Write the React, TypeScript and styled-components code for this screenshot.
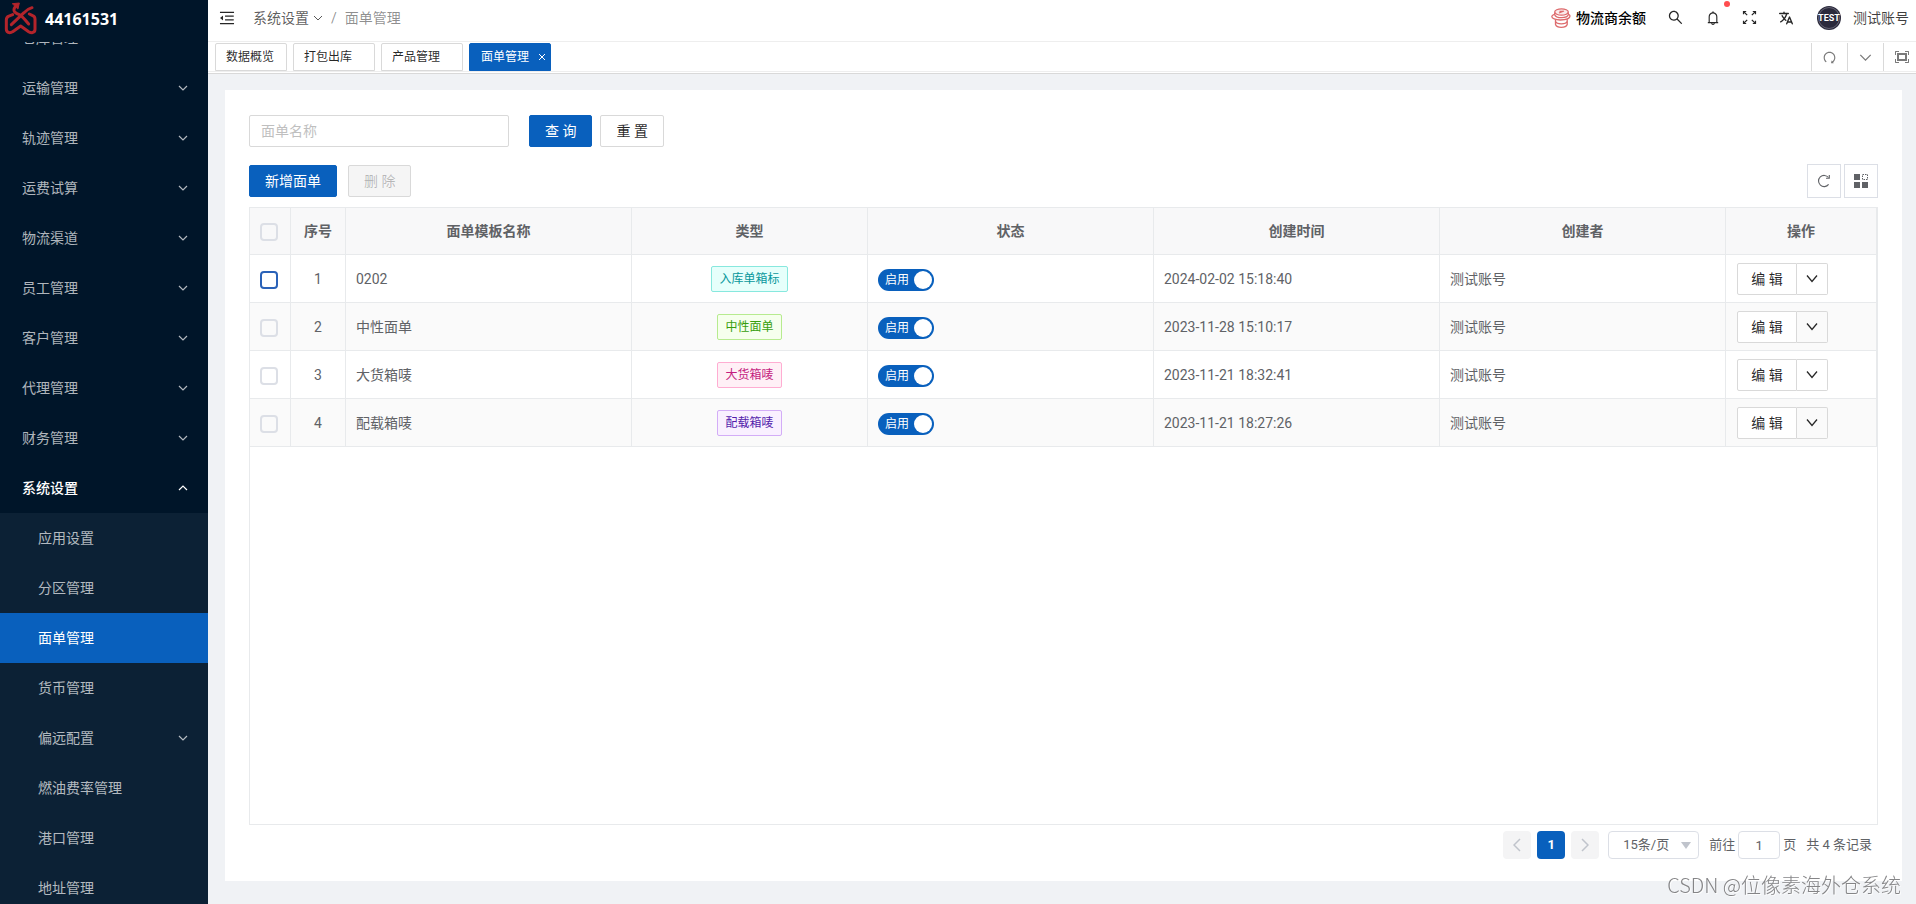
import React, { useLayoutEffect, useRef, useState } from 'react';
import styled, { createGlobalStyle, css } from 'styled-components';
import { AiOutlineMenuFold, AiOutlineSearch, AiOutlineBell, AiOutlineRedo } from 'react-icons/ai';
import { IoLanguage } from 'react-icons/io5';
import { VscScreenFull } from 'react-icons/vsc';

const primary = '#0960bd';
const line = '#e8eaec';

const GlobalStyle = createGlobalStyle`
  *, *::before, *::after { box-sizing: border-box; }
  body {
    margin: 0;
    font-family: Roboto, "Noto Sans CJK SC", sans-serif;
    font-size: 14px;
    line-height: 22px;
    color: rgba(0, 0, 0, 0.85);
    background: #f0f2f5;
  }
  button, input, select { font: inherit; color: inherit; }
  button { cursor: pointer; }
  a { color: inherit; text-decoration: none; }
  ul { list-style: none; margin: 0; padding: 0; }
`;

const Shell = styled.div`
  display: grid;
  grid-template-columns: 208px minmax(0, 1fr);
  height: 100vh;
  overflow: hidden;
`;

/* ---------- sidebar ---------- */

const Sidebar = styled.aside`
  display: flex;
  flex-direction: column;
  min-height: 0;
  background: #001529;
`;

const Brand = styled.a`
  display: flex;
  align-items: center;
  flex: none;
  gap: 8px;
  height: 42px;
  padding: 0 4px 4px;
  color: #fff;
  font: 700 16px/24px "Open Sans", sans-serif;
`;

const MenuScroll = styled.nav`
  flex: 1;
  min-height: 0;
  overflow-y: auto;
  scrollbar-width: none;
`;

const MenuLink = styled.a<{ $sub?: boolean; $active?: boolean; $open?: boolean }>`
  display: flex;
  align-items: center;
  justify-content: space-between;
  height: 50px;
  padding: 0 20px 0 ${(p) => (p.$sub ? 38 : 22)}px;
  color: ${(p) => (p.$active || p.$open ? '#fff' : 'rgba(255, 255, 255, 0.7)')};
  background: ${(p) => (p.$active ? primary : 'transparent')};
  font-weight: ${(p) => (p.$open ? 500 : 400)};
`;

const SubMenu = styled.ul`
  background: #0c2135;
`;

/* ---------- header ---------- */

const Main = styled.div`
  display: flex;
  flex-direction: column;
  min-width: 0;
  min-height: 0;
`;

const Header = styled.header`
  display: flex;
  align-items: center;
  justify-content: space-between;
  flex: none;
  height: 42px;
  padding: 0 7px 6px 10px;
  background: #fff;
  border-bottom: 1px solid #eee;
`;

const HeaderGroup = styled.div<{ $gap: number }>`
  display: flex;
  align-items: center;
  gap: ${(p) => p.$gap}px;
`;

const IconButton = styled.button<{ $light?: boolean }>`
  display: inline-flex;
  position: relative;
  padding: 0;
  border: 0;
  background: none;
  color: ${(p) => (p.$light ? '#fff' : '#262626')};
`;

const Dot = styled.span`
  position: absolute;
  top: -9px;
  right: -9px;
  width: 6px;
  height: 6px;
  border-radius: 50%;
  background: #ff4d4f;
`;

const Crumbs = styled.nav`
  display: flex;
  align-items: center;
  gap: 8px;
  color: rgba(0, 0, 0, 0.45);
`;

const CrumbLink = styled.a`
  display: flex;
  align-items: center;
  gap: 4px;
  color: rgba(0, 0, 0, 0.65);
`;

const Balance = styled.a`
  display: flex;
  align-items: center;
  gap: 5px;
  color: #000;
  font-weight: 500;
`;

const Account = styled.button`
  display: flex;
  align-items: center;
  gap: 12px;
  margin-left: 2px;
  padding: 0;
  border: 0;
  background: none;
  color: rgba(0, 0, 0, 0.75);
`;

const TabBar = styled.div`
  display: flex;
  justify-content: space-between;
  align-items: flex-end;
  flex: none;
  height: 32px;
  padding-bottom: 1px;
  background: #fff;
  border-bottom: 1px solid #d9d9d9;
`;

const Tabs = styled.div`
  display: flex;
  flex: 1;
  gap: 6px;
  padding-left: 7px;
  border-bottom: 1px solid #eee;
`;

const Tab = styled.div<{ $active?: boolean; $fixed?: boolean }>`
  display: flex;
  align-items: center;
  gap: 9px;
  width: ${(p) => (p.$fixed ? 72 : 82)}px;
  height: 28px;
  padding-left: ${(p) => (p.$active ? 11 : 10)}px;
  border: 1px solid ${(p) => (p.$active ? primary : '#d9d9d9')};
  border-radius: 2px 2px 0 0;
  background: ${(p) => (p.$active ? primary : '#fff')};
  color: ${(p) => (p.$active ? '#fff' : 'rgba(0, 0, 0, 0.85)')};
  font-size: 12px;
  white-space: nowrap;
`;

const TabTool = styled.button`
  display: flex;
  align-items: center;
  justify-content: center;
  flex: none;
  width: 36px;
  height: 28px;
  padding: 0;
  border: 0;
  border-left: 1px solid #d9d9d9;
  background: none;
  color: #7a7a7a;
`;

const TabTools = styled.div`
  display: flex;
  width: 105px;
  border-bottom: 1px solid #eee;
  overflow: hidden;
`;

/* ---------- content ---------- */

const Card = styled.main`
  display: flex;
  flex-direction: column;
  flex: 1;
  min-height: 0;
  margin: 16px 14px 23px 17px;
  padding: 25px 24px 22px;
  background: #fff;
`;

const FilterRow = styled.form`
  display: flex;
  gap: 8px;
  margin-bottom: 18px;
`;

const NameInput = styled.input`
  width: 260px;
  height: 32px;
  margin-right: 12px;
  padding: 4px 11px;
  border: 1px solid #d9d9d9;
  border-radius: 2px;
  &::placeholder { color: #bfbfbf; }
`;

const Button = styled.button<{ $primary?: boolean }>`
  height: 32px;
  padding: 0 15px;
  border: 1px solid ${(p) => (p.$primary ? primary : '#d9d9d9')};
  border-radius: 2px;
  background: ${(p) => (p.$primary ? primary : '#fff')};
  color: ${(p) => (p.$primary ? '#fff' : 'rgba(0, 0, 0, 0.85)')};
  white-space: pre;
  &:disabled {
    background: #f5f5f5;
    color: rgba(0, 0, 0, 0.25);
  }
`;

const Toolbar = styled.div`
  display: flex;
  align-items: center;
  justify-content: space-between;
  height: 32px;
  margin-bottom: 10px;
`;

const ToolButton = styled.button`
  display: flex;
  align-items: center;
  justify-content: center;
  width: 34px;
  height: 34px;
  padding: 0;
  border: 1px solid #dcdfe6;
  background: #fff;
  color: #606266;
`;

const TableFrame = styled.div`
  flex: 1;
  min-height: 0;
  border: 1px solid ${line};
  overflow: auto;
`;

const Table = styled.table`
  width: 100%;
  table-layout: fixed;
  border-collapse: separate;
  border-spacing: 0;
  color: #606266;
`;

const Col = styled.col<{ $width?: number }>`
  width: ${(p) => (p.$width ? `${p.$width}px` : 'auto')};
`;

const cell = css<{ $center?: boolean }>`
  height: 48px;
  padding: 0 10px;
  border-right: 1px solid ${line};
  border-bottom: 1px solid ${line};
  text-align: ${(p) => (p.$center ? 'center' : 'left')};
`;

const Th = styled.th<{ $center?: boolean }>`
  ${cell}
  height: 47px;
  background: #f8f8f9;
  font-weight: 700;
`;

const Td = styled.td<{ $center?: boolean }>`
  ${cell}
`;

const Row = styled.tr`
  &:nth-child(even) { background: #fafafa; }
`;

const Check = styled.input<{ $hover?: boolean }>`
  appearance: none;
  display: block;
  width: 18px;
  height: 18px;
  margin: 2px 0 0 0;
  border: 2px solid ${(p) => (p.$hover ? '#2a62b8' : '#dcdfe6')};
  border-radius: 4px;
  &:checked { background: ${primary}; border-color: ${primary}; }
`;

const tones = {
  cyan: ['#08979c', '#e6fffb', '#87e8de'],
  green: ['#389e0d', '#f6ffed', '#b7eb8f'],
  pink: ['#c41d7f', '#fff0f6', '#ffadd2'],
  purple: ['#531dab', '#f9f0ff', '#d3adf7'],
};

const Tag = styled.span<{ $tone: keyof typeof tones }>`
  display: inline-block;
  padding: 0 7px;
  border: 1px solid ${(p) => tones[p.$tone][2]};
  border-radius: 2px;
  background: ${(p) => tones[p.$tone][1]};
  color: ${(p) => tones[p.$tone][0]};
  font-size: 12px;
  line-height: 24px;
  vertical-align: middle;
`;

const Switch = styled.button<{ $on: boolean }>`
  display: flex;
  flex-direction: ${(p) => (p.$on ? 'row' : 'row-reverse')};
  align-items: center;
  justify-content: space-between;
  width: 56px;
  height: 22px;
  margin-top: 2px;
  padding: 0 2px 0 7px;
  border: 0;
  border-radius: 11px;
  background: ${(p) => (p.$on ? primary : '#bfbfbf')};
  color: #fff;
  font-size: 12px;
  &::after {
    content: '';
    width: 18px;
    height: 18px;
    border-radius: 50%;
    background: #fff;
  }
`;

const SplitButton = styled.div`
  display: flex;
  margin-left: 1px;
`;

const EditButton = styled(Button)`
  width: 60px;
  padding: 0;
  border-radius: 2px 0 0 2px;
`;

const MoreButton = styled(Button)`
  display: flex;
  align-items: center;
  justify-content: center;
  width: 31px;
  padding: 0;
  border-left: 0;
  border-radius: 0 2px 2px 0;
  background: transparent;
`;

/* ---------- pagination ---------- */

const Pager = styled.div`
  display: flex;
  align-items: center;
  justify-content: flex-end;
  gap: 6px;
  padding: 6px 6px 0 0;
  color: #606266;
  font-size: 13px;
`;

const PageButton = styled.button<{ $current?: boolean }>`
  display: flex;
  align-items: center;
  justify-content: center;
  width: 28px;
  height: 28px;
  padding: 0;
  border: 0;
  border-radius: 4px;
  background: ${(p) => (p.$current ? primary : '#f4f4f5')};
  color: ${(p) => (p.$current ? '#fff' : '#c0c4cc')};
  font-weight: 700;
`;

const SizeBox = styled.label`
  display: flex;
  align-items: center;
  position: relative;
  margin: 0 4px 0 3px;
  svg { position: absolute; right: 8px; pointer-events: none; }
`;

const SizeSelect = styled.select`
  appearance: none;
  width: 91px;
  height: 28px;
  padding: 0 14px;
  border: 1px solid #dcdfe6;
  border-radius: 4px;
  background: #fff;
`;

const JumpLabel = styled.label`
  display: flex;
  align-items: center;
  gap: 3px;
  margin-right: 4px;
`;

const JumpInput = styled.input`
  width: 42px;
  height: 28px;
  padding: 0;
  border: 1px solid #dcdfe6;
  border-radius: 4px;
  text-align: center;
`;

const Watermark = styled.div`
  position: fixed;
  right: 15px;
  bottom: 4px;
  color: #858587;
  font-family: "Noto Sans CJK SC", sans-serif;
  font-size: 20px;
  font-weight: 300;
  line-height: 30px;
  text-shadow: 1px 1px 0 rgba(255, 255, 255, 0.8);
  pointer-events: none;
`;

/* ---------- drawings ---------- */

const Chevron = ({ size = 10, up = false, width = 1.2 }: { size?: number; up?: boolean; width?: number }) => (
  <svg width={size} height={size} viewBox="0 0 10 10" fill="none" stroke="currentColor" strokeWidth={width} aria-hidden>
    <path d={up ? 'M1 7 5 3 9 7' : 'M1 3 5 7 9 3'} />
  </svg>
);

const DownArrow = () => (
  <svg width="12" height="12" viewBox="0 0 12 12" fill="none" stroke="currentColor" strokeWidth="1.3" aria-hidden>
    <path d="M1 2.500 6 8.500 11 2.500" />
  </svg>
);

const Side = ({ left = false }: { left?: boolean }) => (
  <svg width="8" height="14" viewBox="0 0 8 14" fill="none" stroke="currentColor" strokeWidth="1.5" aria-hidden>
    <path d={left ? 'M7 1 1 7 7 13' : 'M1 1 7 7 1 13'} />
  </svg>
);

const Close = () => (
  <svg width="8" height="8" viewBox="0 0 8 8" stroke="currentColor" aria-hidden>
    <path d="M1 1 7 7M7 1 1 7" />
  </svg>
);

const Logo = () => (
  <svg width="33" height="34" viewBox="0 0 99 102" fill="none" stroke="#b3242b" strokeWidth="9" strokeLinejoin="round" strokeLinecap="round" aria-hidden>
    <path d="M26 38 13 43Q7 46 7 54V82Q7 92 17 92Q22 92 26 89L50 72L74 89Q79 92 84 92Q93 91 93 82V51Q93 44 86 41L76 36" />
    <path d="M84 17Q70 21 60 32L22 68" />
    <path d="M38 10Q27 19 31 28Q34 34 46 38Q54 42 74 66" />
    <path d="M26 5 46 3 42 20Z" fill="#b3242b" strokeWidth="3" />
  </svg>
);

const Coins = () => (
  <svg width="20" height="20" viewBox="0 0 20 20" fill="none" stroke="#dd6b6d" strokeWidth="1.3" aria-hidden>
    <ellipse cx="10.5" cy="4" rx="6.8" ry="3.2" fill="#fbeaea" />
    <path d="M8 5 13 3M8.500 3.300h3.500" />
    <path d="M3.700 4.500v2.200c.6 1.800 3.400 3 6.800 3s6.400-1.200 6.800-3V4.500" />
    <path d="M3.300 6.300C1.700 6.800.8 7.600.8 8.400c0 2 3.700 3.600 8.400 3.600 5.800 0 9.800-1.700 9.800-4 0-.8-.5-1.300-1.400-1.700" />
    <path d="M4.500 11.500v2c.6 1.500 2.900 2.300 5.800 2.300s5.300-.8 5.900-2.300v-2.200" />
    <path d="M4.500 13.500v3c.6 1.700 2.900 2.800 5.800 2.800s5.300-1.100 5.900-2.800v-3" />
  </svg>
);

const Expand = () => (
  <svg width="15" height="15" viewBox="0 0 15 15" fill="none" stroke="currentColor" strokeWidth="1.2" aria-hidden>
    <path d="M1.500 4.200V1.500h2.700M1.500 1.500 5.200 5.200M10.800 1.500h2.700v2.700M13.500 1.500 9.800 5.200M1.500 10.800v2.700h2.700M1.500 13.500 5.200 9.800M10.800 13.500h2.700v-2.700M13.500 13.500 9.800 9.800" />
  </svg>
);

const Refresh = () => (
  <svg width="14" height="14" viewBox="0 0 14 14" fill="none" stroke="currentColor" strokeWidth="1.1" aria-hidden>
    <path d="M11.600 10.400A5.600 5.600 0 1 1 11.500 3.500" />
    <path d="M12.300 1v3.200H9" />
  </svg>
);

const Columns = () => (
  <svg width="14" height="14" viewBox="0 0 14 14" fill="currentColor" aria-hidden>
    <path d="M0 0h6v6H0zM0 8h6v6H0zM8 8h6v6H8z" />
    <path d="M8.500.5h5v5h-5z" fill="none" stroke="currentColor" strokeDasharray="1.500 1" />
  </svg>
);

const Avatar = () => (
  <svg width="24" height="24" viewBox="0 0 24 24" aria-hidden>
    <circle cx="12" cy="12" r="12" fill="#2b2a3c" />
    <circle cx="12" cy="12" r="10.500" fill="none" stroke="#8b8a98" strokeWidth=".6" />
    <text x="12" y="15.300" textAnchor="middle" fill="#fff" fontFamily="Roboto, sans-serif" fontWeight="700" fontSize="9">TEST</text>
  </svg>
);

/* ---------- data ---------- */

const topMenu = ['仓库管理', '运输管理', '轨迹管理', '运费试算', '物流渠道', '员工管理', '客户管理', '代理管理', '财务管理'];
const subMenu = ['应用设置', '分区管理', '面单管理', '货币管理', '偏远配置', '燃油费率管理', '港口管理', '地址管理'];
const openTabs = ['数据概览', '打包出库', '产品管理', '面单管理'];

const rows: { name: string; type: string; tone: keyof typeof tones; time: string; by: string }[] = [
  { name: '0202', type: '入库单箱标', tone: 'cyan', time: '2024-02-02 15:18:40', by: '测试账号' },
  { name: '中性面单', type: '中性面单', tone: 'green', time: '2023-11-28 15:10:17', by: '测试账号' },
  { name: '大货箱唛', type: '大货箱唛', tone: 'pink', time: '2023-11-21 18:32:41', by: '测试账号' },
  { name: '配载箱唛', type: '配载箱唛', tone: 'purple', time: '2023-11-21 18:27:26', by: '测试账号' },
];

function StatusSwitch() {
  const [on, setOn] = useState(true);
  return (
    <Switch type="button" role="switch" aria-checked={on} $on={on} onClick={() => setOn(!on)}>
      {on ? '启用' : '停用'}
    </Switch>
  );
}

export default function App() {
  const menu = useRef<HTMLElement>(null);

  useLayoutEffect(() => {
    if (menu.current) menu.current.scrollTop = 29;
  }, []);

  return (
    <>
      <GlobalStyle />
      <Shell>
        <Sidebar>
          <Brand href="#home"><Logo />44161531</Brand>
          <MenuScroll ref={menu}>
            <ul>
              {topMenu.map((label) => (
                <li key={label}><MenuLink href="#menu">{label}<Chevron /></MenuLink></li>
              ))}
              <li>
                <MenuLink href="#menu" $open>系统设置<Chevron up /></MenuLink>
                <SubMenu>
                  {subMenu.map((label) => (
                    <li key={label}>
                      <MenuLink href="#menu" $sub $active={label === '面单管理'}>
                        {label}
                        {label === '偏远配置' && <Chevron />}
                      </MenuLink>
                    </li>
                  ))}
                </SubMenu>
              </li>
            </ul>
          </MenuScroll>
        </Sidebar>

        <Main>
          <Header>
            <HeaderGroup $gap={17}>
              <IconButton type="button" aria-label="折叠菜单"><AiOutlineMenuFold size={18} /></IconButton>
              <Crumbs>
                <CrumbLink href="#settings">系统设置<Chevron width={1} /></CrumbLink>
                <span>/</span>
                <span>面单管理</span>
              </Crumbs>
            </HeaderGroup>
            <HeaderGroup $gap={21}>
              <Balance href="#balance"><Coins />物流商余额</Balance>
              <IconButton type="button" aria-label="搜索"><AiOutlineSearch size={17} /></IconButton>
              <IconButton type="button" aria-label="通知"><AiOutlineBell size={16} /><Dot /></IconButton>
              <IconButton type="button" aria-label="全屏"><Expand /></IconButton>
              <IconButton type="button" aria-label="语言"><IoLanguage size={16} /></IconButton>
              <Account type="button"><Avatar />测试账号</Account>
            </HeaderGroup>
          </Header>

          <TabBar>
            <Tabs>
              {openTabs.map((label, i) => (
                <Tab key={label} $fixed={i === 0} $active={i === 3}>
                  {label}
                  {i === 3 && (
                    <IconButton type="button" aria-label="关闭" $light><Close /></IconButton>
                  )}
                </Tab>
              ))}
            </Tabs>
            <TabTools>
              <TabTool type="button" aria-label="刷新"><AiOutlineRedo size={15} /></TabTool>
              <TabTool type="button" aria-label="更多"><Chevron size={13} width={1} /></TabTool>
              <TabTool type="button" aria-label="全屏内容"><VscScreenFull size={16} /></TabTool>
            </TabTools>
          </TabBar>

          <Card>
            <FilterRow onSubmit={(e) => e.preventDefault()}>
              <NameInput aria-label="面单名称" placeholder="面单名称" />
              <Button type="submit" $primary>查 询</Button>
              <Button type="reset">重 置</Button>
            </FilterRow>
            <Toolbar>
              <HeaderGroup $gap={11}>
                <Button type="button" $primary>新增面单</Button>
                <Button type="button" disabled>删 除</Button>
              </HeaderGroup>
              <HeaderGroup $gap={3}>
                <ToolButton type="button" aria-label="刷新"><Refresh /></ToolButton>
                <ToolButton type="button" aria-label="列设置"><Columns /></ToolButton>
              </HeaderGroup>
            </Toolbar>

            <TableFrame>
              <Table>
                <colgroup>
                  <Col $width={41} />
                  <Col $width={55} />
                  <Col />
                  <Col $width={236} />
                  <Col />
                  <Col />
                  <Col />
                  <Col $width={151} />
                </colgroup>
                <thead>
                  <tr>
                    <Th $center><Check type="checkbox" aria-label="全选" /></Th>
                    <Th $center>序号</Th>
                    <Th $center>面单模板名称</Th>
                    <Th $center>类型</Th>
                    <Th $center>状态</Th>
                    <Th $center>创建时间</Th>
                    <Th $center>创建者</Th>
                    <Th $center>操作</Th>
                  </tr>
                </thead>
                <tbody>
                  {rows.map((row, i) => (
                    <Row key={row.name}>
                      <Td $center><Check type="checkbox" aria-label={`选择 ${row.name}`} $hover={i === 0} /></Td>
                      <Td $center>{i + 1}</Td>
                      <Td>{row.name}</Td>
                      <Td $center><Tag $tone={row.tone}>{row.type}</Tag></Td>
                      <Td><StatusSwitch /></Td>
                      <Td>{row.time}</Td>
                      <Td>{row.by}</Td>
                      <Td>
                        <SplitButton>
                          <EditButton type="button">编 辑</EditButton>
                          <MoreButton type="button" aria-label="更多操作"><DownArrow /></MoreButton>
                        </SplitButton>
                      </Td>
                    </Row>
                  ))}
                </tbody>
              </Table>
            </TableFrame>

            <Pager>
              <PageButton type="button" aria-label="上一页"><Side left /></PageButton>
              <PageButton type="button" $current>1</PageButton>
              <PageButton type="button" aria-label="下一页"><Side /></PageButton>
              <SizeBox>
                <SizeSelect aria-label="每页条数"><option>15条/页</option></SizeSelect>
                <svg width="10" height="7" viewBox="0 0 10 7" fill="#c0c4cc" aria-hidden><path d="M0 0h10L5 7z" /></svg>
              </SizeBox>
              <JumpLabel>前往<JumpInput defaultValue="1" />页</JumpLabel>
              <span>共 4 条记录</span>
            </Pager>
          </Card>
        </Main>
      </Shell>
      <Watermark>CSDN @位像素海外仓系统</Watermark>
    </>
  );
}
